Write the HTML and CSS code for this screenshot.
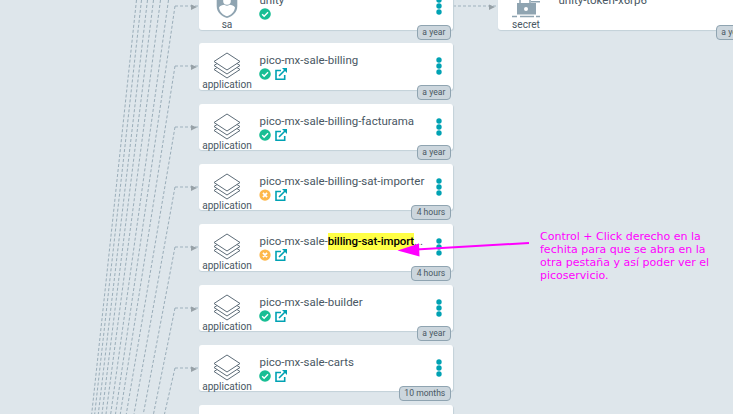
FILE: index.html
```
<!DOCTYPE html>
<html lang="es">
<head>
<meta charset="utf-8">
<title>Applications</title>
<link rel="stylesheet" href="styles.css">
</head>
<body>
<svg class="defs" width="0" height="0">
  <symbol id="layers" viewBox="0 0 28 28"><g fill="#fff" stroke="#5d6c78" stroke-width="1" stroke-linejoin="round"><path d="M1 17.500 14 9 27 17.500 14 26Z"/><path d="M1 13.500 14 5 27 13.500 14 22Z"/><path d="M1 9.500 14 1 27 9.500 14 18Z"/></g></symbol>
  <symbol id="ok" viewBox="0 0 512 512"><circle cx="256" cy="256" r="248" fill="#18be94"/><path d="M135 265 220 350 385 185" fill="none" stroke="#fff" stroke-width="62"/></symbol>
  <symbol id="bad" viewBox="0 0 512 512"><circle cx="256" cy="256" r="240" fill="#fdb84b"/><path d="M168 168 344 344M344 168 168 344" fill="none" stroke="#fff" stroke-width="72"/></symbol>
  <symbol id="ext" viewBox="0 0 12 12"><path d="M6 2.500H1V11.200H9.700V7M4 8 10 2" fill="none" stroke="#00a2b3" stroke-width="1.600"/><path d="M7 0H12V5Z" fill="#00a2b3"/></symbol>
  <symbol id="dots" viewBox="0 0 6 18"><g fill="#00a2b3"><circle cx="3" cy="3" r="2.700"/><circle cx="3" cy="9" r="2.700"/><circle cx="3" cy="15" r="2.700"/></g></symbol>
  <symbol id="sa" viewBox="0 0 22 28"><path d="M11 0 21.300 4V14C21.300 20 17 24 11 26 5 24 .7 20 .7 14V4Z" fill="#8fa4b1"/><circle cx="11" cy="9" r="3.800" fill="#fff"/><path d="M3 15.500C4 13.500 6.500 13 8.500 12.700Q11 15 13.500 12.700C15.500 13 18 13.500 19 15.500C18.500 20 15 23 11 24.300 7 23 3.500 20 3 15.500Z" fill="#fff"/></symbol>
  <symbol id="secret" viewBox="0 0 30 28"><g fill="none" stroke="#8fa4b1" stroke-width="1.500"><path d="M9 12V8Q9 4 14 4T19 8V12M20 9.700H29M24 7H27M1 24.500H6M9 24.500H23M25 24.500H29"/></g><path d="M6 11H25V22.500H6Z" fill="#8fa4b1"/><circle cx="15" cy="17" r="2" fill="#fff"/></symbol>
</svg>

<svg class="edges" width="733" height="414">
  <g class="fan">
    <path d="M136.500 0 91.700 414M141.500 0 94.700 414M147.500 0 98.300 414M153.500 0 102 414M160.500 0 106 414M168.500 0 110.700 414"/>
    <path d="M175 6 115.500 414"/><path d="M175 66 120.300 414"/><path d="M175 127 126.300 414"/><path d="M175 187 134 414"/><path d="M175 247 143.300 414"/><path d="M175 308 153.500 414"/><path d="M175 368 164.500 414"/>
  </g>
  <path class="stub" d="M175 6H199M175 66H199M175 127H199M175 187H199M175 247H199M175 308H199M175 368H199M453 6H497"/>
  <path class="heads" d="M191 4.500 197 7 191 10ZM191 64.500 197 67 191 70ZM191 125 197 127.500 191 130.500ZM191 185.500 197 188 191 191ZM191 245.500 197 248 191 251ZM191 306.500 197 309 191 312ZM191 366.500 197 369 191 372ZM489 4.500 495 7 489 10Z"/>
</svg>

<main class="tree">
  <section class="column">
    <article class="node"><div class="kind"><svg class="shield"><use href="#sa"/></svg><span>sa</span></div><div class="info"><p>unity</p><div class="status"><svg><use href="#ok"/></svg></div></div><svg class="menu"><use href="#dots"/></svg><span class="age">a year</span></article>
    <article class="node"><div class="kind"><svg><use href="#layers"/></svg><span>application</span></div><div class="info"><p>pico-mx-sale-billing</p><div class="status"><svg><use href="#ok"/></svg><svg><use href="#ext"/></svg></div></div><svg class="menu"><use href="#dots"/></svg><span class="age">a year</span></article>
    <article class="node"><div class="kind"><svg><use href="#layers"/></svg><span>application</span></div><div class="info"><p>pico-mx-sale-billing-facturama</p><div class="status"><svg><use href="#ok"/></svg><svg><use href="#ext"/></svg></div></div><svg class="menu"><use href="#dots"/></svg><span class="age">a year</span></article>
    <article class="node"><div class="kind"><svg><use href="#layers"/></svg><span>application</span></div><div class="info"><p>pico-mx-sale-billing-sat-importer</p><div class="status"><svg><use href="#bad"/></svg><svg><use href="#ext"/></svg></div></div><svg class="menu"><use href="#dots"/></svg><span class="age">4 hours</span></article>
    <article class="node"><div class="kind"><svg><use href="#layers"/></svg><span>application</span></div><div class="info"><p>pico-mx-sale-<mark>billing-sat-import</mark>...</p><div class="status"><svg><use href="#bad"/></svg><svg><use href="#ext"/></svg></div></div><svg class="menu"><use href="#dots"/></svg><span class="age">4 hours</span></article>
    <article class="node"><div class="kind"><svg><use href="#layers"/></svg><span>application</span></div><div class="info"><p>pico-mx-sale-builder</p><div class="status"><svg><use href="#ok"/></svg><svg><use href="#ext"/></svg></div></div><svg class="menu"><use href="#dots"/></svg><span class="age">a year</span></article>
    <article class="node"><div class="kind"><svg><use href="#layers"/></svg><span>application</span></div><div class="info"><p>pico-mx-sale-carts</p><div class="status"><svg><use href="#ok"/></svg><svg><use href="#ext"/></svg></div></div><svg class="menu"><use href="#dots"/></svg><span class="age">10 months</span></article>
    <article class="node"></article>
  </section>
  <section class="column">
    <article class="node"><div class="kind"><svg class="lock"><use href="#secret"/></svg><span>secret</span></div><div class="info"><p>unity-token-x6rp6</p></div><span class="age">a year</span></article>
  </section>
</main>

<svg class="arrow" width="733" height="414"><path d="M529 243 416 249.500" fill="none" stroke="#f0f" stroke-width="2"/><path d="M397.500 250.500 419 243.500 419.500 256.500Z" fill="#f0f"/></svg>
<p class="note">Control + Click derecho en la<br>fechita para que se abra en la<br>otra pestaña y así poder ver el<br>picoservicio.</p>
</body>
</html>
```
FILE: styles.css
```
* { box-sizing: border-box; }
html { overflow: hidden; }
body {
  margin: 0;
  width: 733px;
  height: 414px;
  overflow: hidden;
  position: relative;
  background: #dee6eb;
  font-family: Roboto, sans-serif;
  color: #495763;
}
p { margin: 0; }
.defs { position: absolute; }
.edges, .arrow { position: absolute; left: 0; top: 0; }
.fan, .stub { fill: none; stroke: #8fa4b1; stroke-width: 1; stroke-dasharray: 3 2; }
.fan { opacity: .85; }
.stub { opacity: .8; }
.heads { fill: #97a1a7; }
.tree {
  position: relative;
  display: flex;
  gap: 45px;
  width: 800px;
  margin-left: 199px;
}
.column { width: 254px; margin-top: -17px; display: flex; flex-direction: column; gap: 13.330px; }
.node {
  position: relative;
  flex: none;
  display: flex;
  height: 46.500px;
  margin-bottom: .5px;
  background: #fff;
  border-radius: 3px;
  box-shadow: .5px 1px 1px #c3d1d9;
}
.kind {
  width: 56px;
  padding-top: 9px;
  display: flex;
  flex-direction: column;
  align-items: center;
  font-size: 10.100px;
  line-height: 12px;
}
.kind svg { width: 28px; height: 28px; flex: none; margin-bottom: -1px; }
.kind .shield { width: 22px; }
.kind .lock { width: 30px; }
.info { margin-left: 4.500px; padding-top: 10px; font-size: 11.500px; line-height: 14px; white-space: nowrap; flex: 1; }
mark { padding: 1px 0 2px; background: #ffff45; color: #000; font-weight: 500; letter-spacing: -.150px; }
.status { display: flex; gap: 4px; margin: 1px 0 0 -.5px; }
.status svg { width: 12px; height: 12px; }
.menu { width: 6px; height: 18px; margin: 14px 10.700px 0 0; }
.age {
  position: absolute;
  right: 2px;
  bottom: -10px;
  height: 15px;
  padding: 0 4.700px;
  border: 1px solid #8fa4b1;
  border-radius: 4px;
  background: #ccd6dd;
  font-size: 8.600px;
  line-height: 13px;
}
.note {
  position: absolute;
  left: 540px;
  top: 230px;
  font: 11px/13px "DejaVu Sans", sans-serif;
  color: #f0f;
  white-space: nowrap;
}
```
